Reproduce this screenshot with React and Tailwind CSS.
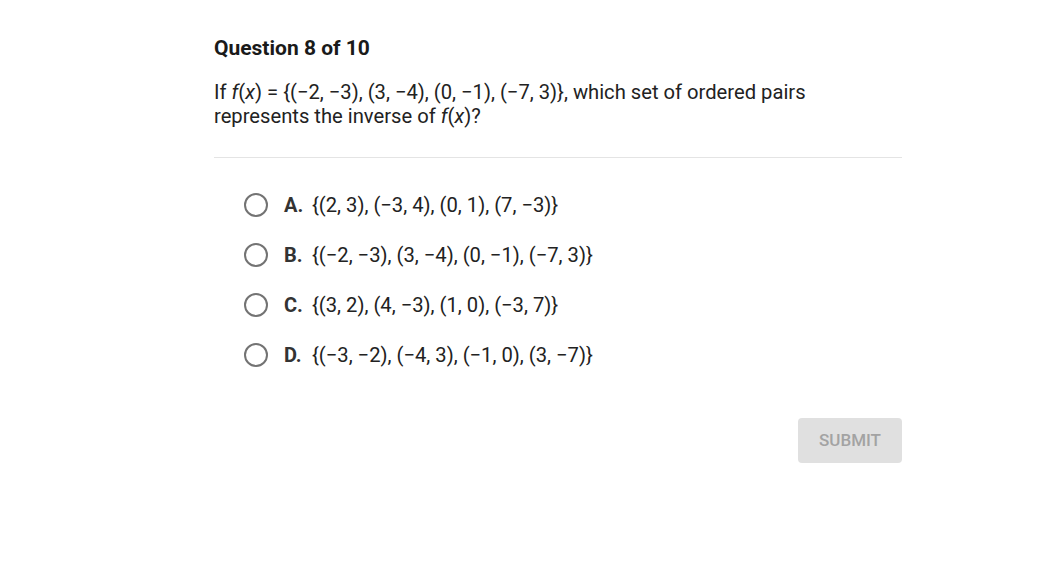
import React from 'react';

const options = [
  { letter: 'A.', text: '{(2, 3), (−3, 4), (0, 1), (7, −3)}' },
  { letter: 'B.', text: '{(−2, −3), (3, −4), (0, −1), (−7, 3)}' },
  { letter: 'C.', text: '{(3, 2), (4, −3), (1, 0), (−3, 7)}' },
  { letter: 'D.', text: '{(−3, −2), (−4, 3), (−1, 0), (3, −7)}' },
];

const F = () => (
  <span>
    <i>f</i>(<i>x</i>)
  </span>
);

export default function App() {
  return (
    <div className="w-[1038px] h-[587px] bg-white text-[#222] font-['Roboto',sans-serif]">
      <div className="w-[688px] ml-[214px] pt-[34px]">
        <h1 className="text-[21px] font-bold leading-[28px] text-[#1a1a1a]">Question 8 of 10</h1>
        <p className="mt-[18px] w-[600px] text-[20.2px] leading-[24px] text-[#222]">
          If <F /> = {'{'}(−2, −3), (3, −4), (0, −1), (−7, 3){'}'}, which set of ordered pairs represents the inverse of <F />?
        </p>
        <div className="mt-[29px] border-t border-[#e4e4e4]" />
        <div className="mt-[35px] ml-[30px] flex flex-col gap-[26px]">
          {options.map((o) => (
            <div key={o.letter} className="flex items-center h-[24px]">
              <span className="w-[24px] h-[24px] rounded-full border-2 border-[#737373] bg-white" />
              <span className="ml-[16px] text-[20px] font-bold text-[#333] w-[28px]">{o.letter}</span>
              <span className="text-[20.2px] text-[#222]">{o.text}</span>
            </div>
          ))}
        </div>
        <div className="mt-[51px] flex justify-end">
          <button className="w-[104px] h-[45px] rounded-[4px] bg-[#e0e0e0] text-[#a3a3a3] text-[17px] font-medium">
            SUBMIT
          </button>
        </div>
      </div>
    </div>
  );
}
